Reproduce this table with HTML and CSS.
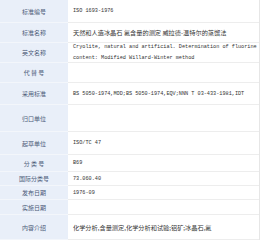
FILE: index.html
```
<!DOCTYPE html>
<html lang="zh">
<head>
<meta charset="utf-8">
<link rel="stylesheet" href="styles.css">
</head>
<body>
<div class="table">
  <div class="row h23"><div class="label">标准编号</div><div class="value"><span class="en">ISO 1693-1976</span></div></div>
  <div class="row h20"><div class="label">标准名称</div><div class="value"><span class="zh">天然和人造冰晶石 氟含量的测定 威拉德-温特尔的蒸馏法</span></div></div>
  <div class="row h20"><div class="label">英文名称</div><div class="value"><span class="en two">Cryolite, natural and artificial. Determination of fluorine content: Modified Willard-Winter method</span></div></div>
  <div class="row h20"><div class="label">代 替 号</div><div class="value"></div></div>
  <div class="row h22"><div class="label">采用标准</div><div class="value"><span class="en">BS 5050-1974,MOD;BS 5050-1974,EQV;NNN T 03-433-1981,IDT</span></div></div>
  <div class="row h27"><div class="label">归口单位</div><div class="value"></div></div>
  <div class="row h23"><div class="label">起草单位</div><div class="value"><span class="en">ISO/TC 47</span></div></div>
  <div class="row h17"><div class="label">分 类 号</div><div class="value"><span class="en">B69</span></div></div>
  <div class="row h14"><div class="label">国际分类号</div><div class="value"><span class="en">73.060.40</span></div></div>
  <div class="row h14"><div class="label">发布日期</div><div class="value"><span class="en">1976-09</span></div></div>
  <div class="row h15"><div class="label">实施日期</div><div class="value"></div></div>
  <div class="row h25"><div class="label">内容介绍</div><div class="value"><span class="zh">化学分析,含量测定,化学分析和试验;铝矿;冰晶石,氟</span></div></div>
</div>
</body>
</html>
```
FILE: styles.css
```
html, body {
  margin: 0;
  padding: 0;
  background: #ffffff;
}
.table {
  width: 259px;
  border-right: 1px solid #e6e6e6;
  display: flex;
  flex-direction: column;
}
.row {
  display: grid;
  grid-template-columns: 68px 1fr;
}
.h14 { height: 14px; }
.h15 { height: 15px; }
.h17 { height: 17px; }
.h20 { height: 20px; }
.h22 { height: 22px; }
.h23 { height: 23px; }
.h25 { height: 25px; }
.h27 { height: 27px; }
.label {
  background: #e9eff9;
  color: #4b5a78;
  font-family: "Noto Sans CJK SC", sans-serif;
  font-size: 6px;
  display: flex;
  align-items: center;
  justify-content: center;
  white-space: pre;
  border-bottom: 1px solid #f3f6fb;
}
.value {
  border-bottom: 1px solid #ededed;
  display: flex;
  align-items: center;
  padding-left: 5px;
  color: #333333;
  overflow: hidden;
}
.zh {
  font-family: "Noto Sans CJK SC", sans-serif;
  font-size: 6.2px;
  white-space: nowrap;
}
.en {
  font-family: "Liberation Mono", monospace;
  font-size: 5.2px;
  white-space: nowrap;
}
.en.two {
  white-space: normal;
  line-height: 11px;
  width: 188px;
}
```
